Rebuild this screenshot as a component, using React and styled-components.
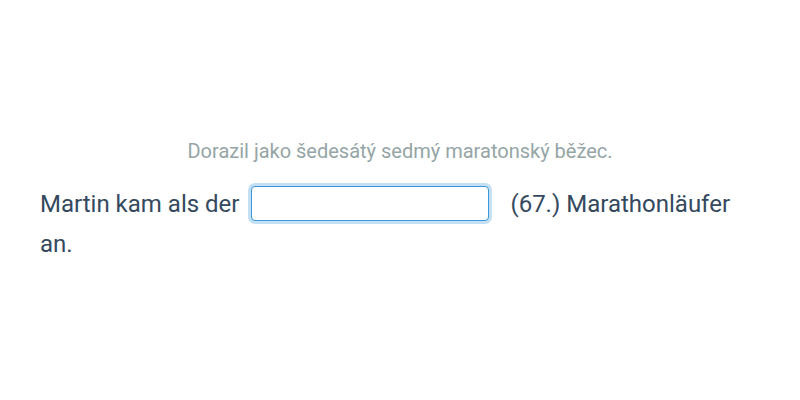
import React from 'react'
import styled, { createGlobalStyle } from 'styled-components'

const Global = createGlobalStyle`
body {
  margin: 0;
  background: #ffffff;
  font-family: Roboto, "Liberation Sans", sans-serif;
}
`

const Page = styled.div`
width: 800px;
height: 400px;
box-sizing: border-box;
padding: 137px 40px 0;
`

const Hint = styled.div`
text-align: center;
color: #95a5a6;
font-size: 20px;
line-height: 28px;
margin-bottom: 19px;
`

const Sentence = styled.div`
color: #34495e;
font-size: 24px;
line-height: 40px;
`

const Blank = styled.input`
width: 238px;
height: 35px;
box-sizing: border-box;
margin: 0 15px 0 12px;
vertical-align: middle;
border: 1px solid #3b96dc;
border-radius: 4px;
box-shadow: 0 0 0 3px #c3e0f5;
outline: none;
font: inherit;
padding: 0 8px;
position: relative;
top: -2px;
`

const App = () => {
  return (
    <Page>
      <Global />
      <Hint>Dorazil jako šedesátý sedmý maratonský běžec.</Hint>
      <Sentence>
        Martin kam als der<Blank type="text" /> (67.) Marathonläufer an.
      </Sentence>
    </Page>
  )
}

export default App
